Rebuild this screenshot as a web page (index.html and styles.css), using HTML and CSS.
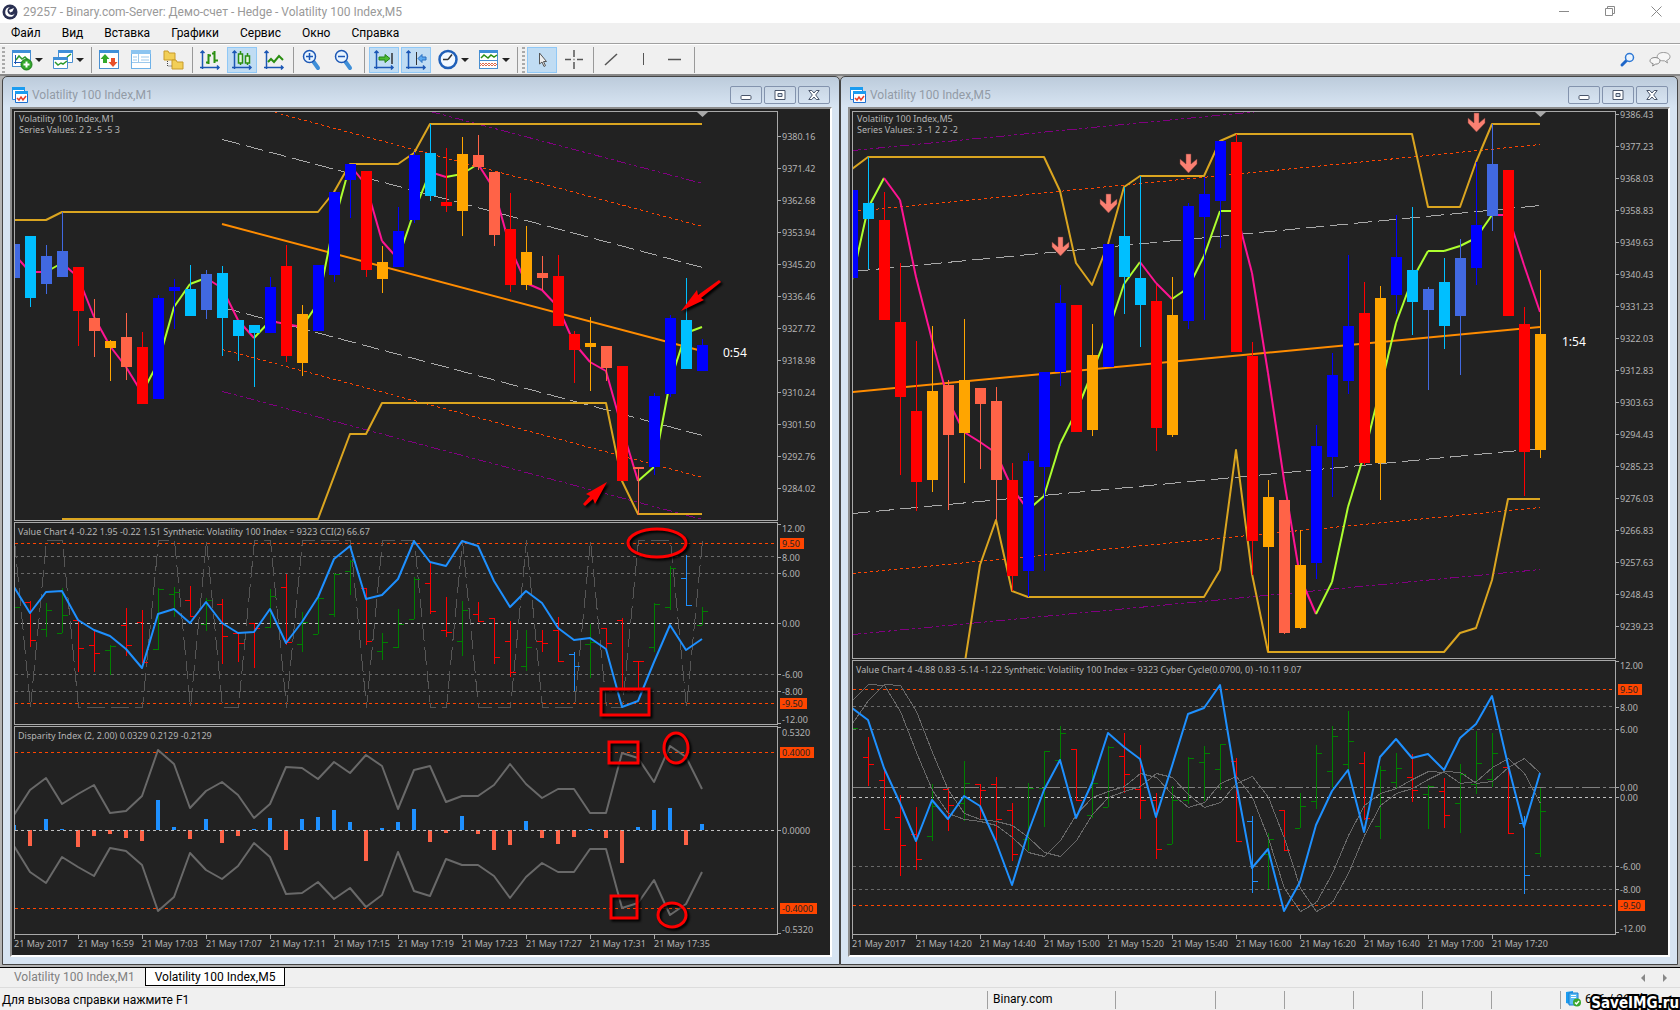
FILE: index.html
```html
<!DOCTYPE html>
<html lang="ru">
<head>
<meta charset="utf-8">
<meta name="viewport" content="width=device-width, initial-scale=1">
<title>29257 - Binary.com-Server: Демо-счет - Hedge - Volatility 100 Index,M5</title>
<link rel="stylesheet" href="styles.css">
</head>
<body>
<header class="titlebar">
  <svg class="app-icon" width="16" height="16" viewBox="0 0 16 16"><circle cx="8" cy="8" r="7.5" fill="#2a3052"/><path d="M8 3.2a4.8 4.8 0 1 0 4.6 6.2A4 4 0 1 1 8 3.2z" fill="#fff"/><path d="M7 6l5-2-1.500 3.500L8 8.600z" fill="#fff"/></svg>
  <h1 class="title">29257 - Binary.com-Server: Демо-счет - Hedge - Volatility 100 Index,M5</h1>
  <div class="window-controls">
    <button type="button" aria-label="Свернуть"><svg width="11" height="11"><path d="M0 5.500h10"/></svg></button>
    <button type="button" aria-label="Развернуть"><svg width="11" height="11"><path d="M.5 2.500h7v7h-7zM2.500 2.500v-2h7v7h-2"/></svg></button>
    <button type="button" aria-label="Закрыть"><svg width="11" height="11"><path d="M.5.5l10 10M10.500.5l-10 10"/></svg></button>
  </div>
</header>

<nav class="menubar">
  <button type="button">Файл</button>
  <button type="button">Вид</button>
  <button type="button">Вставка</button>
  <button type="button">Графики</button>
  <button type="button">Сервис</button>
  <button type="button">Окно</button>
  <button type="button">Справка</button>
</nav>

<div class="toolbar">
  <span class="grip"></span>
  <button type="button" class="tool with-arrow" aria-label="Новый график"><svg width="22" height="22" viewBox="0 0 22 22"><rect x="1.500" y="1.500" width="18" height="16" fill="#fff" stroke="#4a8fd0"/><path d="M1 1h19v3H1z" fill="#3f8fd8"/><path d="M4.500 6v9M3 13.500h14" stroke="#1c57b5" fill="none"/><path d="M5 11l3-4 3 3 3-2 3 3" stroke="#2e9a2e" fill="none" stroke-width="1.500"/><circle cx="15.500" cy="15.500" r="5.500" fill="#35a82c" stroke="#1d7a1a"/><path d="M12.500 15.500h6M15.500 12.500v6" stroke="#fff" stroke-width="2"/></svg><i class="caret"></i></button>
  <button type="button" class="tool with-arrow" aria-label="Профили"><svg width="22" height="22" viewBox="0 0 22 22"><path d="M6.500 1.500h14v12h-14z" fill="#fff" stroke="#4a8fd0"/><path d="M6 1h15v3H6z" fill="#3f8fd8"/><path d="M1.500 8.500h14v11h-14z" fill="#fff" stroke="#4a8fd0"/><path d="M1 8h15v3H1z" fill="#3f8fd8"/><path d="M3 13l3 3 3-2 2 1 4-3M15 8l4-3" stroke="#2e9a2e" stroke-width="1.500" fill="none"/></svg><i class="caret"></i></button>
  <span class="sep"></span>
  <button type="button" class="tool" aria-label="Обзор рынка"><svg width="22" height="22" viewBox="0 0 22 22"><rect x="1.500" y="1.500" width="19" height="18" fill="#fff" stroke="#4a8fd0"/><path d="M1 1h20v3H1z" fill="#3f8fd8"/><path d="M7 5l4.500 5H9v4H5v-4H2.500z" fill="#35a82c"/><path d="M15 18l-4.500-5H13V9h4v4h2.500z" fill="#e8502a"/></svg></button>
  <button type="button" class="tool" aria-label="Окно данных"><svg width="22" height="22" viewBox="0 0 22 22"><rect x="1.500" y="1.500" width="19" height="18" fill="#fff" stroke="#6fb2e8"/><path d="M1 1h20v4H1z" fill="#8cc4f0"/><path d="M8.500 5v8M2 13.500h18M3 8h4M3 11h4M11 8h8M11 11h8" stroke="#9dc9ec"/></svg></button>
  <button type="button" class="tool" aria-label="Навигатор"><svg width="22" height="22" viewBox="0 0 22 22"><path d="M2 2h4l1 2h6v7H2z" fill="#f2cf57" stroke="#c89b2a"/><path d="M10 11h4l1 2h6v7H10z" fill="#f2cf57" stroke="#c89b2a"/><path d="M5.500 12v5h4" stroke="#444" stroke-dasharray="1 1" fill="none"/></svg></button>
  <span class="sep"></span>
  <button type="button" class="tool" aria-label="Бары"><svg width="22" height="22" viewBox="0 0 22 22"><path d="M3.500 2v18M1 18.500h19M1.500 4l2-2 2 2M18 16.500l2 2-2 2" stroke="#1c57b5" fill="none" stroke-width="1.500"/><path d="M9.500 5v10M7 13.500h2.500M9.500 6.500H12M15.500 2v12M13 4.500h2.500M15.500 11.500H19" stroke="#2b8f12" stroke-width="2" fill="none"/></svg></button>
  <button type="button" class="tool active" aria-label="Японские свечи"><svg width="22" height="22" viewBox="0 0 22 22"><path d="M3.500 2v18M1 18.500h19M1.500 4l2-2 2 2M18 16.500l2 2-2 2" stroke="#1c57b5" fill="none" stroke-width="1.500"/><path d="M9.500 2v14M16.500 4v12" stroke="#2b8f12" stroke-width="1.500"/><path d="M7.500 5h4v9h-4zM14.500 7h4v7h-4z" stroke="#2b8f12" stroke-width="1.500" fill="#e6f7e0"/></svg></button>
  <button type="button" class="tool" aria-label="Линия"><svg width="22" height="22" viewBox="0 0 22 22"><path d="M3.500 2v18M1 18.500h19M1.500 4l2-2 2 2M18 16.500l2 2-2 2" stroke="#1c57b5" fill="none" stroke-width="1.500"/><path d="M5 13l3-3 3 3 5-6 4 4" stroke="#2b8f12" stroke-width="2" fill="none"/></svg></button>
  <span class="sep"></span>
  <button type="button" class="tool" aria-label="Увеличить"><svg width="22" height="22" viewBox="0 0 22 22"><path d="M13 12l5 7" stroke="#3f8fd8" stroke-width="4" stroke-linecap="round"/><circle cx="9.500" cy="7.500" r="6" fill="#e8f4ff" stroke="#1c57b5" stroke-width="1.500"/><path d="M6 7.500h7M9.500 4v7" stroke="#1c57b5" stroke-width="1.500"/></svg></button>
  <button type="button" class="tool" aria-label="Уменьшить"><svg width="22" height="22" viewBox="0 0 22 22"><path d="M13 12l5 7" stroke="#3f8fd8" stroke-width="4" stroke-linecap="round"/><circle cx="9.500" cy="7.500" r="6" fill="#e8f4ff" stroke="#1c57b5" stroke-width="1.500"/><path d="M6 7.500h7" stroke="#1c57b5" stroke-width="1.500"/></svg></button>
  <span class="sep wide"></span>
  <button type="button" class="tool active" aria-label="Автопрокрутка"><svg width="22" height="22" viewBox="0 0 22 22"><path d="M3.500 2v18M1 18.500h19M1.500 4l2-2 2 2M18 16.500l2 2-2 2" stroke="#1c57b5" fill="none" stroke-width="1.500"/><path d="M6 8h6V5.500l5 4-5 4V11H6z" fill="#4cba32" stroke="#25821a"/><path d="M19 4v11" stroke="#333" stroke-width="1.500"/></svg></button>
  <button type="button" class="tool active" aria-label="Сдвиг графика"><svg width="22" height="22" viewBox="0 0 22 22"><path d="M3.500 2v18M1 18.500h19M1.500 4l2-2 2 2M18 16.500l2 2-2 2" stroke="#1c57b5" fill="none" stroke-width="1.500"/><path d="M11.500 3v13" stroke="#333"/><path d="M21 8h-4V5.500l-4 4 4 4V11h4z" fill="#5aa9f0" stroke="#2a6fc0"/></svg></button>
  <button type="button" class="tool with-arrow" aria-label="Таймфрейм"><svg width="22" height="22" viewBox="0 0 22 22"><circle cx="11" cy="10.500" r="8.500" fill="#f2f8ff" stroke="#1f5fb8" stroke-width="2.500"/><path d="M11 10.500l4-5M11 10.500H6" stroke="#333" stroke-width="1.500"/></svg><i class="caret"></i></button>
  <button type="button" class="tool with-arrow" aria-label="Шаблоны"><svg width="22" height="22" viewBox="0 0 22 22"><rect x="1.500" y="1.500" width="18" height="18" fill="#fff" stroke="#4a8fd0"/><path d="M1 1h19v3H1z" fill="#3f8fd8"/><path d="M1 11.500h19" stroke="#4a8fd0"/><path d="M3 9l3-3 4 3 3-3 3 2 3-2" stroke="#2b8f12" stroke-width="1.500" fill="none"/><path d="M2 17l3-3 3 3 3-3 3 3 3-3 2 2M2 14l3 3 3-3 3 3 3-3 3 3 2-2" stroke="#e06a4a" fill="none"/></svg><i class="caret"></i></button>
  <span class="sep"></span>
  <span class="grip"></span>
  <button type="button" class="tool active" aria-label="Курсор"><svg width="22" height="22" viewBox="0 0 22 22"><path d="M8.500 4v11l2.500-2 2 4.500 1.500-.8-2-4.200h3z" fill="#eee" stroke="#555"/></svg></button>
  <button type="button" class="tool" aria-label="Перекрестие"><svg width="22" height="22" viewBox="0 0 22 22"><path d="M11 1v7M11 13v7M2 10.500h6M14 10.500h6M10.500 10.500h1" stroke="#555" stroke-width="1.500"/></svg></button>
  <span class="sep"></span>
  <button type="button" class="tool" aria-label="Трендовая линия"><svg width="22" height="22" viewBox="0 0 22 22"><path d="M5 16L17 5" stroke="#555" stroke-width="1.500"/></svg></button>
  <button type="button" class="tool" aria-label="Вертикальная линия"><svg width="22" height="22" viewBox="0 0 22 22"><path d="M11.500 4v12" stroke="#555"/></svg></button>
  <button type="button" class="tool" aria-label="Горизонтальная линия"><svg width="22" height="22" viewBox="0 0 22 22"><path d="M4 10.500h13" stroke="#555" stroke-width="1.500"/></svg></button>
  <span class="sep"></span>
  <span class="spacer"></span>
  <button type="button" class="tool" aria-label="Поиск"><svg width="22" height="22" viewBox="0 0 22 22"><path d="M10 11l-5 5" stroke="#1e66c8" stroke-width="3" stroke-linecap="round"/><circle cx="12.500" cy="8.500" r="4" fill="#eaf4ff" stroke="#2e78d4" stroke-width="1.500"/></svg></button>
  <button type="button" class="tool" aria-label="Чат"><svg width="22" height="22" viewBox="0 0 22 22"><path d="M14.500 3.500c4 0 6.500 1.800 6.500 4.200 0 1.800-1.300 3-3.300 3.700l.8 2.600-3-2.200c-4.500.3-7.300-1.500-7.300-4.100 0-2.400 2.400-4.200 6.300-4.200z" fill="#f6f6f6" stroke="#999"/><path d="M6 8.500c3 0 5 1.400 5 3.400s-2 3.300-4.600 3.300L3.600 17l.6-2.300C2 14 1 13.200 1 11.900c0-2 2-3.400 5-3.400z" fill="#f6f6f6" stroke="#888"/></svg></button>
</div>

<main class="workspace">
  <section class="chart-window">
    <header class="chart-title">
      <svg width="18" height="18" viewBox="0 0 18 18"><path d="M1.500 1.500h12v12h-12z" fill="#fff" stroke="#2a8be0"/><path d="M1 1h13v3H1z" fill="#1b9cf0"/><path d="M4.500 5.500h12v11h-12z" fill="#fff" stroke="#1c6fd0"/><path d="M4 5h13v3H4z" fill="#1b9cf0"/><path d="M6 12l2 2 2-3 2 3 3-4" stroke="#e8402a" fill="none" stroke-width="1.500"/></svg>
      <h2>Volatility 100 Index,M1</h2>
      <button type="button" aria-label="Свернуть"><svg width="12" height="12"><rect x="1" y="6.500" width="10" height="4" rx="1"/></svg></button>
      <button type="button" aria-label="Развернуть"><svg width="12" height="12"><path fill-rule="evenodd" d="M1 1.500h10v9H1zM4 4.500v3h4v-3z"/></svg></button>
      <button type="button" aria-label="Закрыть"><svg width="12" height="12"><path d="M.8 1.500h3L6 4l2.200-2.500h3L7.700 6l3.500 4.500h-3L6 8l-2.200 2.500h-3L4.300 6z"/></svg></button>
    </header>
    <div class="chart-body">
      <div class="pane m1-price">
        <div class="plot"><svg id="m1-price"></svg><p class="caption">Volatility 100 Index,M1<br>Series Values: 2 2 -5 -5 3</p></div>
        <svg class="scale" id="m1-price-scale"></svg>
      </div>
      <div class="pane m1-value">
        <div class="plot"><svg id="m1-value"></svg><p class="caption indicator">Value Chart 4 -0.22 1.95 -0.22 1.51 Synthetic: Volatility 100 Index = 9323 CCI(2) 66.67</p></div>
        <svg class="scale" id="m1-value-scale"></svg>
      </div>
      <div class="pane m1-disparity">
        <div class="plot"><svg id="m1-disparity"></svg><p class="caption indicator">Disparity Index (2, 2.00) 0.0329 0.2129 -0.2129</p></div>
        <svg class="scale" id="m1-disparity-scale"></svg>
      </div>
      <ol class="dates">
        <li>21 May 2017</li><li>21 May 16:59</li><li>21 May 17:03</li><li>21 May 17:07</li><li>21 May 17:11</li><li>21 May 17:15</li><li>21 May 17:19</li><li>21 May 17:23</li><li>21 May 17:27</li><li>21 May 17:31</li><li>21 May 17:35</li>
      </ol>
    </div>
  </section>

  <section class="chart-window">
    <header class="chart-title">
      <svg width="18" height="18" viewBox="0 0 18 18"><path d="M1.500 1.500h12v12h-12z" fill="#fff" stroke="#2a8be0"/><path d="M1 1h13v3H1z" fill="#1b9cf0"/><path d="M4.500 5.500h12v11h-12z" fill="#fff" stroke="#1c6fd0"/><path d="M4 5h13v3H4z" fill="#1b9cf0"/><path d="M6 12l2 2 2-3 2 3 3-4" stroke="#e8402a" fill="none" stroke-width="1.500"/></svg>
      <h2>Volatility 100 Index,M5</h2>
      <button type="button" aria-label="Свернуть"><svg width="12" height="12"><rect x="1" y="6.500" width="10" height="4" rx="1"/></svg></button>
      <button type="button" aria-label="Развернуть"><svg width="12" height="12"><path fill-rule="evenodd" d="M1 1.500h10v9H1zM4 4.500v3h4v-3z"/></svg></button>
      <button type="button" aria-label="Закрыть"><svg width="12" height="12"><path d="M.8 1.500h3L6 4l2.200-2.500h3L7.700 6l3.500 4.500h-3L6 8l-2.200 2.500h-3L4.300 6z"/></svg></button>
    </header>
    <div class="chart-body">
      <div class="pane m5-price">
        <div class="plot"><svg id="m5-price"></svg><p class="caption">Volatility 100 Index,M5<br>Series Values: 3 -1 2 2 -2</p></div>
        <svg class="scale" id="m5-price-scale"></svg>
      </div>
      <div class="pane m5-value">
        <div class="plot"><svg id="m5-value"></svg><p class="caption indicator">Value Chart 4 -4.88 0.83 -5.14 -1.22 Synthetic: Volatility 100 Index = 9323 Cyber Cycle(0.0700, 0) -10.11 9.07</p></div>
        <svg class="scale" id="m5-value-scale"></svg>
      </div>
      <ol class="dates">
        <li>21 May 2017</li><li>21 May 14:20</li><li>21 May 14:40</li><li>21 May 15:00</li><li>21 May 15:20</li><li>21 May 15:40</li><li>21 May 16:00</li><li>21 May 16:20</li><li>21 May 16:40</li><li>21 May 17:00</li><li>21 May 17:20</li>
      </ol>
    </div>
  </section>
</main>

<nav class="tabs">
  <button type="button" class="tab">Volatility 100 Index,M1</button>
  <button type="button" class="tab current">Volatility 100 Index,M5</button>
  <span class="spacer"></span>
  <button type="button" class="scroll" aria-label="Назад"><svg width="6" height="8"><path d="M5 0v8L1 4z"/></svg></button>
  <button type="button" class="scroll" aria-label="Вперед"><svg width="6" height="8"><path d="M1 0v8l4-4z"/></svg></button>
</nav>

<footer class="statusbar">
  <span class="hint">Для вызова справки нажмите F1</span>
  <span class="cell server">Binary.com</span>
  <span class="cell profile"></span>
  <span class="cell"></span>
  <span class="cell"></span>
  <span class="cell"></span>
  <span class="cell"></span>
  <span class="cell"></span>
  <span class="cell traffic"><svg width="16" height="16" viewBox="0 0 16 16"><path d="M1 1l7-1v14l-7-2z" fill="#1b9cf0"/><path d="M4 2h9v12H4z" fill="#5bbcf5" stroke="#1b7fd0"/><path d="M6 4.500h5M6 6.500h5" stroke="#fff"/><circle cx="12" cy="11.500" r="4" fill="#3aa82c"/><path d="M10 11.500l1.500 1.500 2.500-3" stroke="#fff" fill="none" stroke-width="1.500"/></svg>636 / 26 Kb</span>
  <span class="watermark">SaveIMG.ru</span>
</footer>
<script src="charts.js"></script>
</body>
</html>
```
FILE: styles.css
```css
* { box-sizing: border-box; }
html, body { height: 100%; }
body {
  margin: 0;
  display: flex;
  flex-direction: column;
  min-height: 100vh;
  overflow: hidden;
  background: #f0f0f0;
  color: #000;
  font: 12px/16px Roboto, "Noto Sans", sans-serif;
}
button {
  margin: 0;
  padding: 0;
  border: 0;
  background: none;
  color: inherit;
  font: inherit;
}
h1, h2, p, ol { margin: 0; padding: 0; font: inherit; }
.spacer { flex: 1; }

/* Title bar */
.titlebar {
  flex: none;
  display: flex;
  align-items: center;
  height: 23px;
  padding: 0 1px 0 2px;
  background: #fff;
  color: #999;
}
.title { flex: 1; padding-left: 5px; }
.window-controls { display: flex; height: 20px; }
.window-controls button {
  display: flex;
  align-items: center;
  justify-content: center;
  width: 46px;
}
.window-controls svg { fill: none; stroke: #8a8a8a; }

/* Menu */
.menubar {
  flex: none;
  display: flex;
  gap: 1px;
  height: 21px;
  padding-left: 1px;
  border-bottom: 1px solid #a0a0a0;
}
.menubar button { padding: 0 10px; }

/* Toolbar */
.toolbar {
  flex: none;
  display: flex;
  align-items: center;
  height: 32px;
  padding-right: 3px;
  border-top: 1px solid #fff;
  border-bottom: 2px solid #888;
}
.tool {
  display: flex;
  align-items: center;
  justify-content: center;
  width: 30px;
  height: 26px;
  margin-right: 2px;
  border: 1px solid transparent;
}
.tool.with-arrow { width: 39px; gap: 2px; }
.tool.active { background: #c0dcf3; border-color: #90c8f6; }
.tool svg { flex: none; }
.caret {
  border: 4px solid transparent;
  border-top-color: #222;
  border-bottom: 0;
}
.sep {
  width: 1px;
  height: 26px;
  margin: 0 2px;
  background: #999;
}
.sep.wide { margin: 0 4px; }
.grip {
  width: 3px;
  height: 26px;
  margin: 0 2px;
  background: repeating-linear-gradient(#aaa 0 2px, transparent 2px 4px);
}

/* Chart windows */
.workspace {
  flex: 1;
  display: flex;
  min-height: 0;
  padding: 0 2px 2px;
  background: #b4b4b4;
}
.chart-window {
  flex: 1;
  display: flex;
  flex-direction: column;
  min-width: 0;
  padding: 0 7px 7px;
  border: 1px solid #444;
  border-radius: 5px 5px 0 0;
  background: linear-gradient(#bccbdb, #d7e4f2 30px);
}
.chart-title {
  flex: none;
  display: flex;
  align-items: center;
  gap: 2px;
  height: 30px;
  padding: 8px 2px 3px 1px;
  color: #929ba6;
}
.chart-title > svg { flex: none; }
.chart-title h2 { flex: 1; padding-left: 1px; }
.chart-title button {
  display: flex;
  align-items: center;
  justify-content: center;
  width: 32px;
  height: 18px;
  border: 1px solid #8393ad;
  border-radius: 2px;
  background: linear-gradient(#c9d6e4, #d7e4f2);
}
.chart-title button svg { fill: #fff; stroke: #4a566b; }
.chart-body {
  flex: 1;
  display: flex;
  flex-direction: column;
  gap: 1px;
  min-height: 0;
  padding: 2px 0 0 2px;
  border: 2px solid #8c8c8c;
  border-right-color: #fff;
  border-bottom-color: #fff;
  background: #222;
  color: #b4b4b4;
  font: 9px/11px "Noto Sans", "DejaVu Sans Condensed", sans-serif;
}
.pane { display: flex; min-height: 0; }
.m1-price { flex: 410 1 0; }
.m1-value { flex: 203 1 0; }
.m1-disparity { flex: 209 1 0; }
.m5-price { flex: 548 1 0; }
.m5-value { flex: 275 1 0; }
.plot {
  flex: 1;
  display: grid;
  grid-template: minmax(0, 1fr) / minmax(0, 1fr);
  min-width: 0;
  border: 1px solid #a9a9a9;
}
.plot > svg, .caption { grid-area: 1 / 1; }
.plot > svg { width: 100%; height: 100%; overflow: hidden; }
.caption { padding: 1px 4px; white-space: nowrap; }
.caption.indicator { padding: 3px 3px 0; }
.scale { flex: none; width: 52px; height: 100%; overflow: visible; }
.scale text { fill: #b4b4b4; }
.scale .tag { fill: #ff4500; }
.scale .tag-text { fill: #222; }
.scale .tick { fill: #a9a9a9; }
.timer { fill: #fff; font: 12px "Noto Sans", sans-serif; }
.dates {
  flex: none;
  display: flex;
  height: 20px;
  margin-top: -1px;
  list-style: none;
}
.dates li { width: 64px; flex: none; white-space: nowrap; line-height: 10px; }
.dates li::before {
  content: "";
  display: block;
  width: 1px;
  height: 4px;
  background: #a9a9a9;
}
.crisp { shape-rendering: crispEdges; fill: none; }
.smooth { shape-rendering: geometricPrecision; stroke-linejoin: round; }
.mark { fill: none; stroke: #f00; stroke-width: 3; filter: drop-shadow(2px 2px 1px #000); }
.pointer { fill: #f00; filter: drop-shadow(2px 2px 1px #000); }

/* Chart tabs */
.tabs {
  flex: none;
  display: flex;
  height: 21px;
  border-top: 1px solid #000;
  border-bottom: 1px solid #dcdcdc;
}
.tab {
  height: 18px;
  padding: 0 10px 0 14px;
  color: #808080;
}
.tab.current {
  padding: 0 9px;
  background: #fff;
  border: 1px solid #000;
  border-top: 0;
  color: #000;
}
.scroll { width: 22px; }
.scroll svg { fill: #888; }
.tabs .scroll:last-child { margin-right: 4px; }

/* Status bar */
.statusbar {
  flex: none;
  position: relative;
  display: flex;
  align-items: center;
  height: 22px;
  padding: 2px 0 0 2px;
}
.hint { flex: 1; }
.cell {
  width: 69px;
  height: 18px;
  border-left: 1px solid #a0a0a0;
}
.cell.server { width: 128px; padding-left: 5px; }
.cell.profile { width: 100px; }
.cell.traffic {
  display: flex;
  gap: 4px;
  width: 120px;
  padding-left: 4px;
  white-space: nowrap;
}
.cell.traffic svg { flex: none; }
.watermark {
  position: absolute;
  right: 1px;
  bottom: 0;
  color: #fff;
  font: bold 15px/14px "DejaVu Sans Condensed", sans-serif;
  -webkit-text-stroke: 4px #000;
  paint-order: stroke fill;
}
```
FILE: charts.js
```js
// Bars are 16px apart. Vertical values are kept in thirds of a pixel,
// counted from a fixed origin that each pane subtracts.
const NS = 'http://www.w3.org/2000/svg';
const STEP = 16;
const COLORS = {
  b: '#0000ff', r: '#ff0000', t: '#ff6347', o: '#ffa500', s: '#00bfff', y: '#4169e1',
  g: '#008000', d: '#1e90ff'
};

function el(parent, name, attrs, text) {
  const node = document.createElementNS(NS, name);
  for (const key in attrs) node.setAttribute(key, attrs[key]);
  if (text) node.textContent = text;
  parent.appendChild(node);
  return node;
}

function pane(id, origin) {
  const svg = document.getElementById(id);
  const scale = document.getElementById(id + '-scale');
  const y = v => Math.round(v / 3) - origin;
  const x = i => i * STEP - 1;
  const g = el(svg, 'g', { class: 'crisp' });
  const api = { svg, x, y };

  api.line = (points, color, width, dash, smooth) => {
    const attrs = {
      points: points.map(p => `${x(p[0])},${y(p[1])}`).join(' '),
      stroke: color, 'stroke-width': width
    };
    if (width === 1) attrs.transform = 'translate(.5 .5)';
    if (dash) attrs['stroke-dasharray'] = dash;
    if (smooth) attrs.class = 'smooth';
    el(g, 'polyline', attrs);
  };
  api.series = (values, color, width, dash, smooth) =>
    api.line(values.map((v, i) => [i, v]), color, width, dash, smooth);
  api.level = (v, color, dash) =>
    el(g, 'path', { d: `M0 ${y(v) + .5}H4000`, stroke: color, 'stroke-dasharray': dash || '3 3' });
  api.trend = values => {
    for (let i = 1; i < values.length; i++) {
      const up = values[i] < values[i - 1];
      api.line([[i - 1, values[i - 1]], [i, values[i]]], up ? '#adff2f' : '#ff1493', 2, '', true);
    }
  };
  api.box = (bx, v1, v2, w, fill) =>
    el(g, 'rect', { x: bx, y: y(v1), width: w, height: Math.max(1, y(v2) - y(v1)), fill });
  api.candles = text => text.trim().split(/\s*\n\s*/).forEach((row, i) => {
    const [c, high, top, bottom, low] = row.split(' ');
    api.box(x(i), +high, +low, 1, COLORS[c]);
    api.box(x(i) - 5, +top, +bottom, 11, COLORS[c]);
  });
  api.bars = text => text.trim().split(/\s*\n\s*/).forEach((row, i) => {
    const [c, high, low, open, close] = row.split(' ');
    api.box(x(i), +high, +low, 1, COLORS[c]);
    api.box(x(i) - 5, +open, +open, 5, COLORS[c]);
    api.box(x(i), +close, +close, 6, COLORS[c]);
  });

  const s = el(scale, 'g', { transform: 'translate(0 1)' });
  api.label = (v, text, tick) => {
    el(s, 'rect', { class: 'tick', x: 0, y: y(tick || v), width: 3, height: 1 });
    el(s, 'text', { x: 4, y: y(v) + 4 }, text);
  };
  api.tag = (v, text, width) => {
    el(s, 'rect', { class: 'tag', x: 2, y: y(v) - 5, width, height: 11 });
    el(s, 'text', { class: 'tag-text', x: 4, y: y(v) + 4 }, text);
  };
  api.prices = (first, step, v, count) => {
    for (let i = 0; i < count; i++) api.label(v + i * 96, (first - step * i).toFixed(2));
  };
  api.endMarker = () =>
    el(svg, 'path', { d: `M${x(43) - 5} 0h11l-5.500 5z`, fill: '#a9a9a9' });
  api.channel = (from, mid, gray, orange, purple) => {
    const run = (a, b, color, w, dash, smooth) => api.line([[from, a], [43, b]], color, w, dash, smooth);
    purple.forEach(p => run(p[0], p[1], '#800080', 1, '9 3 3 3 3 3'));
    orange.forEach(p => run(p[0], p[1], '#ff4500', 1, '3 3'));
    gray.forEach(p => run(p[0], p[1], '#a9a9a9', 1, '18 6'));
    run(mid[0], mid[1], '#ff8c00', 2, '', true);
  };
  return api;
}

const GOLD = '#daa520';
const DIM = '#696969';

/* M1 price */
const p1 = pane('m1-price', 12);
p1.channel(13, [371, 753], [[118, 500], [622, 1006]], [[-5, 377], [748, 1132]], [[-132, 250], [874, 1258]]);
p1.line([[-1, 360], [2, 360], [3, 336], [19, 336], [20, 276], [21, 192], [24, 192], [25, 159], [26, 72], [43, 72]], GOLD, 2, '', true);
p1.line([[3, 1257], [19, 1257], [21, 1002], [22, 1002], [23, 909], [37, 909], [38, 1143], [39, 1242], [43, 1242]], GOLD, 2, '', true);
p1.trend([462, 516, 516, 489, 530, 650, 738, 800, 880, 790, 621, 552, 534, 565, 660, 715, 664, 672, 680, 610, 370, 195,
  255, 423, 478, 335, 215, 231, 222, 192, 268, 440, 550, 570, 620, 728, 786, 813, 985, 1143, 1100, 845, 700, 681]);
p1.candles(`
  y 432 432 534 534
  s 408 408 594 621
  y 435 468 552 582
  y 337 453 531 531
  r 501 501 633 738
  t 597 654 693 771
  o 720 723 744 843
  t 639 711 801 840
  r 696 741 912 912
  b 585 594 897 897
  b 537 561 574 687
  s 495 567 648 648
  y 510 522 630 657
  s 498 519 654 768
  s 660 660 708 783
  s 675 675 699 861
  b 531 561 699 699
  r 435 498 768 786
  o 615 642 789 828
  b 495 495 693 693
  b 276 276 525 545
  b 192 192 240 354
  r 213 213 510 531
  o 438 486 537 579
  b 321 393 501 501
  b 156 165 360 369
  s 72 159 288 303
  r 144 306 318 336
  o 111 162 333 408
  t 105 165 201 210
  t 216 216 405 438
  r 279 387 555 576
  o 378 456 555 570
  t 468 519 534 570
  r 465 528 678 678
  r 693 702 750 850
  o 651 729 741 873
  t 738 738 804 843
  r 798 798 1143 1143
  t 1101 1101 1107 1244
  b 879 888 1102 1126
  b 645 654 882 892
  s 534 660 807 807
  b 717 735 813 813`);
p1.endMarker();
el(p1.svg, 'text', { class: 'timer', x: 708, y: 245 }, '0:54');
el(p1.svg, 'path', { class: 'pointer', d: 'M666 199L682 178L683 183L704 168L706 170L686 186L689 188Z' });
el(p1.svg, 'path', { class: 'pointer', d: 'M592 370L571 382L575 384L568 392L570 394L578 387L580 392Z' });
p1.prices(9380.16, 8.74, 109, 12);

/* M1 value chart */
const p2 = pane('m1-value', 8);
[124, 175, 478, 529].forEach(v => p2.level(v, DIM));
[85, 565].forEach(v => p2.level(v, '#ff4500'));
p2.level(325, '#c0c0c0');
const cciLows = [1, 4, 5, 6, 7, 8, 11, 13, 14, 17, 22, 26, 27, 29, 30, 31, 33, 34, 35, 37, 38, 42];
p2.series(Array.from({ length: 44 }, (_, i) => cciLows.includes(i) ? 577 : 76), '#555', 1, '18 6');
p2.bars(`
  g 277 277 277 277
  r 258 395 260 376
  g 264 365 343 286
  g 219 355 355 301
  r 316 471 316 400
  r 345 471 391 415
  g 391 479 405 394
  r 279 423 331 391
  r 285 442 322 442
  g 220 405 403 223
  g 216 305 238 232
  r 213 304 256 304
  g 249 347 328 256
  r 252 446 268 364
  r 355 440 355 385
  r 325 459 325 340
  g 222 338 337 244
  r 177 391 217 380
  g 291 410 388 322
  g 246 358 358 250
  g 175 307 298 177
  g 135 240 169 139
  r 220 389 220 379
  g 354 434 409 382
  g 282 398 397 328
  g 187 313 311 193
  r 140 298 205 289
  r 246 365 346 352
  g 258 422 379 286
  r 262 322 298 319
  r 310 446 310 427
  r 318 486 379 472
  g 345 467 454 397
  r 345 411 379 385
  r 306 439 346 439
  d 411 528 418 454
  g 326 488 388 382
  r 340 400 340 385
  r 310 520 314 520
  r 439 520 439 439
  g 264 412 397 268
  g 153 284 277 160
  d 121 271 190 271
  g 277 330 331 289`);
p2.series([215, 295, 231, 228, 316, 346, 364, 403, 459, 298, 281, 324, 260, 325, 353, 350, 282, 384, 322, 246, 132, 94,
  252, 241, 192, 79, 141, 153, 77, 94, 198, 276, 228, 265, 340, 375, 368, 403, 577, 558, 441, 330, 404, 371], COLORS.d, 2, '', true);
el(p2.svg, 'ellipse', { class: 'mark', cx: 642, cy: 20, rx: 29, ry: 14 });
el(p2.svg, 'rect', { class: 'mark', x: 586, y: 166, width: 48, height: 26 });
p2.label(38, '12.00', 27);
p2.label(125, '8.00');
p2.label(175, '6.00');
p2.label(324, '0.00');
p2.label(478, '-6.00');
p2.label(529, '-8.00');
p2.label(611, '-12.00', 625);
p2.tag(85, '9.50', 24);
p2.tag(565, '-9.50', 27);

/* M1 disparity index */
const p3 = pane('m1-disparity', 212);
[712, 1180].forEach(v => p3.level(v, '#ff4500'));
[930, 993, 912, 941, 996, 963, 957, 969, 978, 855, 936, 972, 912, 984, 963, 941, 909, 1005, 912, 906, 885, 921,
  1038, 939, 921, 882, 981, 954, 903, 957, 1005, 990, 918, 969, 987, 966, 941, 969, 1044, 936, 885, 879, 990, 927
].forEach((v, i) => p3.box(p3.x(i) - 2, Math.min(v, 946), Math.max(v, 946), 4, v < 946 ? COLORS.d : COLORS.t));
p3.level(946, '#c0c0c0');
const band = [900, 824, 789, 867, 838, 811, 894, 887, 843, 705, 748, 879, 829, 802, 840, 909, 867, 756, 760, 793, 741, 774,
  719, 753, 882, 766, 752, 861, 844, 843, 811, 746, 808, 850, 822, 822, 893, 893, 715, 730, 800, 693, 727, 822];
p3.series(band, DIM, 2, '', true);
p3.series(band.map(v => 1894 - v), DIM, 2, '', true);
el(p3.svg, 'rect', { class: 'mark', x: 594, y: 15, width: 29, height: 21 });
el(p3.svg, 'ellipse', { class: 'mark', cx: 661, cy: 21, rx: 12, ry: 15 });
el(p3.svg, 'rect', { class: 'mark', x: 596, y: 169, width: 26, height: 22 });
el(p3.svg, 'ellipse', { class: 'mark', cx: 657, cy: 188, rx: 14, ry: 12 });
p3.label(650, '0.5320', 637);
p3.label(945, '0.0000');
p3.label(1241, '-0.5320', 1254);
p3.tag(712, '0.4000', 34);
p3.tag(1180, '-0.4000', 37);

/* M5 price */
const p4 = pane('m5-price', 12);
p4.channel(0, [877, 680], [[514, 316], [1240, 1044]], [[332, 133], [1420, 1222]], [[151, -47], [1603, 1406]]);
p4.line([[0, 207], [1, 171], [12, 171], [13, 273], [14, 490], [15, 555], [16, 432], [17, 261], [18, 229], [22, 228],
  [23, 123], [24, 102], [35, 102], [36, 321], [38, 321], [39, 186], [40, 72], [43, 72]], GOLD, 2, '', true);
p4.line([[7, 1705], [8, 1395], [9, 1260], [10, 1472], [11, 1491], [22, 1491], [23, 1410], [24, 1050], [25, 1423],
  [26, 1656], [37, 1656], [38, 1600], [39, 1585], [40, 1440], [41, 1197], [43, 1197]], GOLD, 2, '', true);
p4.trend([540, 325, 235, 300, 530, 720, 900, 995, 1027, 1060, 1165, 1230, 1187, 1032, 935, 820, 695, 552, 486, 549, 597,
  565, 467, 333, 332, 520, 820, 1140, 1430, 1543, 1447, 1220, 1065, 870, 670, 540, 454, 453, 438, 414, 345, 346, 495, 635]);
p4.candles(`
  b 270 270 533 533
  s 171 309 357 507
  r 276 360 660 660
  r 489 666 891 1125
  r 723 933 1145 1233
  o 678 873 1140 1175
  t 840 855 1005 1230
  o 657 840 999 1148
  t 864 864 912 1107
  t 861 903 1140 1260
  r 1089 1140 1428 1472
  b 1059 1083 1413 1492
  b 815 815 1101 1413
  b 556 609 816 857
  r 615 615 996 996
  o 672 765 990 1008
  b 432 432 801 801
  s 261 408 531 642
  s 229 534 615 741
  r 555 603 984 1053
  o 531 645 1005 1011
  b 309 318 663 687
  b 231 282 352 660
  b 123 123 303 444
  r 102 126 756 756
  r 726 768 1323 1425
  o 1140 1191 1341 1655
  t 1200 1200 1599 1602
  o 1290 1395 1584 1587
  b 975 1038 1389 1437
  b 759 825 1071 1191
  b 465 678 843 881
  r 546 639 1089 1095
  o 558 594 1089 1200
  b 345 471 585 641
  s 321 510 606 705
  y 561 567 630 870
  s 474 546 678 747
  y 417 474 648 825
  b 186 375 503 555
  y 72 192 348 393
  r 210 210 648 648
  r 621 672 1056 1188
  o 510 702 1050 1074`);
[[13, 411], [16, 282], [21, 162], [39, 39]].forEach(([i, v]) =>
  el(p4.svg, 'path', {
    transform: `translate(${p4.x(i) - 8} ${p4.y(v)})`, fill: '#fa8072', stroke: '#7d3f38', 'stroke-width': .5,
    d: 'M6 0h5v10l6-5v5l-8.500 9-8.500-9v-5l6 5z'
  }));
p4.endMarker();
el(p4.svg, 'text', { class: 'timer', x: 709, y: 234 }, '1:54');
p4.prices(9386.43, 9.2, 43, 17);

/* M5 value chart */
const p5 = pane('m5-value', 6);
[154, 223, 634, 703].forEach(v => p5.level(v, DIM));
[103, 751].forEach(v => p5.level(v, '#ff4500'));
p5.level(397, '#808080', '18 3 3 3');
p5.level(427, '#c0c0c0');
p5.bars(`
  g 220 220 220 220
  r 246 392 307 328
  r 340 523 376 523
  r 420 662 487 571
  r 457 645 536 613
  g 388 558 544 454
  r 400 527 403 451
  g 318 497 443 385
  r 388 492 388 406
  r 366 555 388 493
  r 445 617 466 598
  g 384 587 553 398
  g 289 515 398 289
  g 213 322 316 235
  r 283 436 283 436
  g 345 488 481 385
  g 274 457 457 277
  r 234 413 304 358
  r 270 491 401 436
  r 415 611 436 583
  g 394 568 568 436
  g 307 446 436 310
  g 273 437 322 295
  g 268 404 343 268
  r 310 559 319 559
  d 484 713 499 679
  g 535 703 598 553
  r 466 586 466 586
  g 415 520 520 454
  g 270 461 439 295
  g 213 398 349 244
  g 168 345 328 259
  r 291 494 325 490
  g 334 551 514 346
  g 294 400 382 340
  r 298 440 367 404
  g 390 521 418 394
  r 370 518 409 481
  g 327 533 445 358
  g 228 416 388 325
  g 234 397 373 295
  r 337 535 337 535
  d 484 716 505 661
  g 399 605 595 469`);
const cycle = [135, 88, 91, 168, 290, 405, 475, 493, 498, 510, 545, 590, 604, 555, 478, 425, 409, 392, 355, 365, 418, 455,
  440, 385, 362, 425, 550, 700, 768, 742, 655, 540, 450, 415, 400, 372, 347, 352, 385, 378, 335, 310, 355, 445];
p5.series(cycle, '#696969', 1);
p5.series([205].concat(cycle.slice(0, 43)), '#696969', 1);
p5.series([160, 196, 340, 445, 558, 434, 492, 422, 453, 560, 691, 535, 405, 315, 488, 385, 233, 275, 313, 485, 333, 178,
  160, 90, 380, 638, 582, 768, 680, 510, 408, 345, 531, 305, 251, 310, 296, 345, 250, 206, 122, 330, 515, 354], COLORS.d, 2, '', true);
p5.label(31, '12.00', 19);
p5.label(155, '8.00');
p5.label(223, '6.00');
p5.label(397, '0.00');
p5.label(425, '0.00');
p5.label(634, '-6.00');
p5.label(703, '-8.00');
p5.label(820, '-12.00', 832);
p5.tag(103, '9.50', 24);
p5.tag(751, '-9.50', 27);
```
